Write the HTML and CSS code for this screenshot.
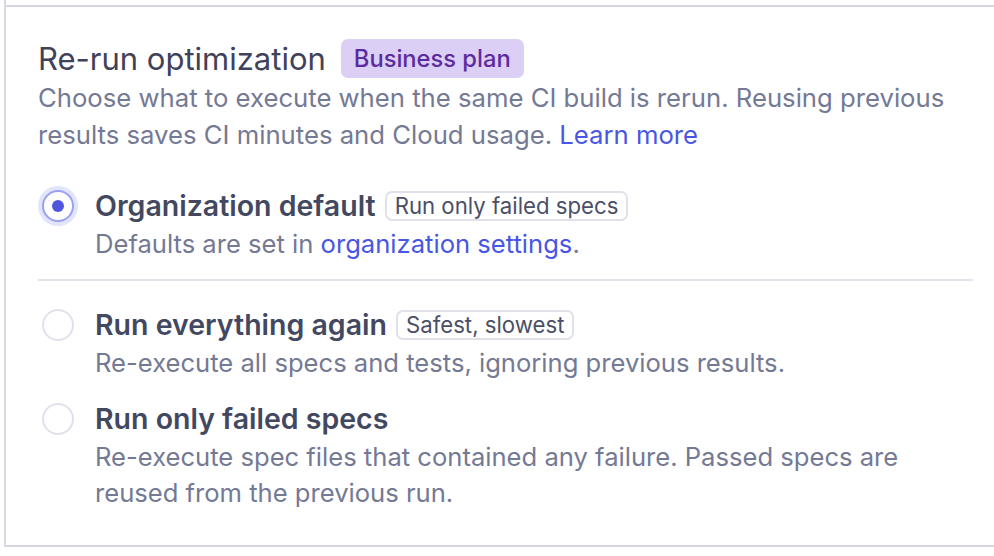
FILE: index.html
```html
<!DOCTYPE html>
<html lang="en">
<head>
  <meta charset="UTF-8">
  <title>Re-run optimization</title>
  <link rel="stylesheet" href="styles.css">
</head>
<body>

  <div class="frame">
    <section class="setting">
      <div class="heading">
        <h2>Re-run optimization</h2>
        <span class="plan">Business plan</span>
      </div>
      <p class="lead">Choose what to execute when the same CI build is rerun. Reusing previous results saves CI minutes and Cloud usage. <a href="#">Learn more</a></p>

      <div class="options">
        <label class="option">
          <span class="radio-col"><span class="radio checked"></span></span>
          <span class="option-body">
            <span class="option-title">Organization default <span class="tag">Run only failed specs</span></span>
            <span class="option-desc">Defaults are set in <a href="#">organization settings</a>.</span>
          </span>
        </label>

        <hr class="divider">

        <label class="option option-second">
          <span class="radio-col"><span class="radio"></span></span>
          <span class="option-body">
            <span class="option-title">Run everything again <span class="tag">Safest, slowest</span></span>
            <span class="option-desc">Re-execute all specs and tests, ignoring previous results.</span>
          </span>
        </label>

        <label class="option option-third">
          <span class="radio-col"><span class="radio"></span></span>
          <span class="option-body">
            <span class="option-title">Run only failed specs</span>
            <span class="option-desc">Re-execute spec files that contained any failure. Passed specs are reused from the previous run.</span>
          </span>
        </label>
      </div>
    </section>
  </div>

</body>
</html>
```

FILE: styles.css
```css
body {
  margin: 0;
  background: #ffffff;
  font-family: 'Inter', 'Noto Sans', sans-serif;
  color: #434861;
}

.frame {
  margin-left: 4px;
  padding-top: 5px;
  border-left: 2px solid #d9d9e6;
}

.setting {
  border-top: 2px solid #d5d5e3;
  border-bottom: 2px solid #d5d5e3;
  padding: 31px 21px 34px 32px;
}

.heading {
  display: flex;
  align-items: center;
  gap: 15px;
  height: 40px;
}

h2 {
  margin: 0;
  font-size: 31px;
  font-weight: 400;
  color: #3f4259;
}

.plan {
  background: #dccff5;
  color: #5b2b9f;
  font-size: 23.7px;
  font-weight: 500;
  line-height: 39px;
  padding: 0 13px;
  border-radius: 7px;
}

.lead {
  margin: 1px 0 0;
  font-size: 25.7px;
  line-height: 37px;
  color: #747994;
}

a {
  color: #4956e3;
  text-decoration: none;
}

.options {
  margin-top: 33px;
}

.option {
  display: flex;
  gap: 17px;
}

.radio-col {
  flex: 0 0 40px;
  height: 40px;
  display: flex;
  align-items: center;
  justify-content: center;
}

.radio {
  box-sizing: border-box;
  width: 32px;
  height: 32px;
  border: 2px solid #e1e1ec;
  border-radius: 50%;
  background: #ffffff;
}

.radio.checked {
  border-color: #9ba1f2;
  box-shadow: 0 0 0 4px #e2e4fb;
  display: flex;
  align-items: center;
  justify-content: center;
}

.radio.checked::after {
  content: "";
  width: 12px;
  height: 12px;
  border-radius: 50%;
  background: #4f58dc;
}

.option-body {
  display: flex;
  flex-direction: column;
  padding-right: 30px;
}

.option-title {
  display: flex;
  align-items: center;
  gap: 9px;
  font-size: 28.5px;
  font-weight: 600;
  line-height: 40px;
  color: #434861;
}

.tag {
  font-size: 22.2px;
  font-weight: 400;
  line-height: 26px;
  padding: 0 8px;
  border: 2px solid #e1e1ea;
  border-radius: 7px;
  color: #4b4f66;
}

.option-desc {
  font-size: 25.6px;
  line-height: 36px;
  color: #747994;
}

.divider {
  border: 0;
  border-top: 2px solid #e3e3ec;
  margin: 17px 0 24px;
}

.option-third {
  margin-top: 18px;
}
```
